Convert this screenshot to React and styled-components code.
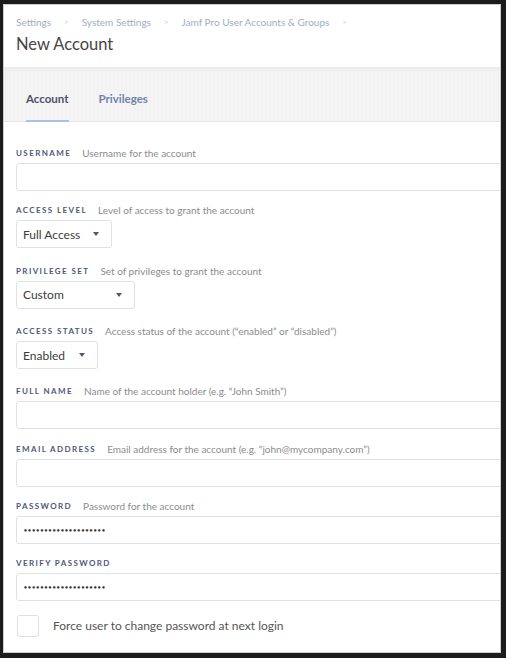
import styled, { createGlobalStyle } from "styled-components";

const GlobalStyle = createGlobalStyle`
  html, body {
    margin: 0;
    padding: 0;
    background-color: #1c1c1c;
    font-family: Lato, "Open Sans", "Liberation Sans", sans-serif;
  }
`;

const Panel = styled.div`
  display: flex;
  flex-direction: column;
  margin: 4px 5px 5px 3px;
  height: 649px;
  box-sizing: border-box;
  background-color: white;
  border: 1px solid #cdcdcd;
  overflow: hidden;
`;

const Header = styled.div`
  display: flex;
  flex-direction: column;
  padding: 10px 12px 13px 12px;
  gap: 5px;
`;

const Crumbs = styled.div`
  display: flex;
  align-items: center;
  gap: 13px;
  height: 14px;
  font-size: 10px;
  color: #9eadc8;
`;

const Sep = styled.span`
  color: #c4ccdb;
  font-size: 8px;
`;

const Title = styled.div`
  font-size: 16.5px;
  line-height: 20px;
  color: #444;
`;

const TabBar = styled.div`
  display: flex;
  align-items: flex-end;
  height: 53px;
  padding: 0 22px;
  gap: 30px;
  background-color: #f4f4f4;
  background-image: radial-gradient(#eeeeee 0.6px, transparent 0.8px);
  background-size: 4px 4px;
  border-top: 1px solid #ececec;
  border-bottom: 1px solid #e6e6e6;
  box-shadow: inset 0 2px 3px rgba(0, 0, 0, 0.03);
`;

const Tab = styled.div`
  font-size: 11.5px;
  font-weight: 700;
  padding-bottom: 15px;
  color: ${(p) => (p.active ? "#4c5366" : "#7084ab")};
  border-bottom: 2px solid ${(p) => (p.active ? "#aac2dd" : "transparent")};
  margin-bottom: -1px;
`;

const Form = styled.div`
  display: flex;
  flex-direction: column;
  padding: 25px 0 0 12px;
`;

const Field = styled.div`
  display: flex;
  flex-direction: column;
  gap: 4px;
  margin-bottom: ${(p) => (p.select ? "16.4px" : "13.3px")};
`;

const LabelRow = styled.div`
  display: flex;
  align-items: center;
  height: 12px;
  gap: 11px;
`;

const Label = styled.span`
  font-size: 8px;
  font-weight: 700;
  letter-spacing: 1.4px;
  text-transform: uppercase;
  color: #4d5877;
`;

const Hint = styled.span`
  font-size: 10px;
  color: #8c8c8c;
`;

const Input = styled.div`
  display: flex;
  align-items: center;
  height: 28px;
  width: calc(100% + 4px);
  box-sizing: border-box;
  padding-left: 7px;
  border: 1px solid #dee1e8;
  border-radius: 3px;
  background: white;
`;

const Dots = styled.span`
  font-size: 5px;
  letter-spacing: 1.1px;
  color: #333;
`;

const Select = styled.div`
  display: flex;
  align-items: center;
  justify-content: space-between;
  height: 28px;
  width: ${(p) => p.w}px;
  box-sizing: border-box;
  padding: 0 12px 0 6px;
  border: 1px solid #dee1e8;
  border-radius: 3px;
  font-size: 12px;
  color: #3c3c3c;
`;

const Caret = styled.span`
  width: 0;
  height: 0;
  border-left: 3.5px solid transparent;
  border-right: 3.5px solid transparent;
  border-top: 4px solid #4d5877;
`;

const CheckRow = styled.div`
  display: flex;
  align-items: center;
  gap: 14px;
  padding-left: 1px;
`;

const Box = styled.div`
  width: 22px;
  height: 22px;
  box-sizing: border-box;
  border: 1px solid #dcdfe6;
  border-radius: 3px;
`;

const CheckText = styled.span`
  font-size: 12px;
  color: #555;
`;

const fields = [
  { label: "Username", hint: "Username for the account" },
  { label: "Access Level", hint: "Level of access to grant the account", select: "Full Access", w: 96 },
  { label: "Privilege Set", hint: "Set of privileges to grant the account", select: "Custom", w: 119 },
  { label: "Access Status", hint: "Access status of the account (\u201cenabled\u201d or \u201cdisabled\u201d)", select: "Enabled", w: 82 },
  { label: "Full Name", hint: "Name of the account holder (e.g. \u201cJohn Smith\u201d)" },
  { label: "Email Address", hint: "Email address for the account (e.g. \u201cjohn@mycompany.com\u201d)" },
  { label: "Password", hint: "Password for the account", pw: true },
  { label: "Verify Password", pw: true },
];

export default function App() {
  return (
    <>
      <GlobalStyle />
      <Panel>
        <Header>
          <Crumbs>
            <span>Settings</span>
            <Sep>&gt;</Sep>
            <span>System Settings</span>
            <Sep>&gt;</Sep>
            <span>Jamf Pro User Accounts &amp; Groups</span>
            <Sep>&gt;</Sep>
          </Crumbs>
          <Title>New Account</Title>
        </Header>
        <TabBar>
          <Tab active>Account</Tab>
          <Tab>Privileges</Tab>
        </TabBar>
        <Form>
          {fields.map((f) => (
            <Field key={f.label} select={!!f.select}>
              <LabelRow>
                <Label>{f.label}</Label>
                {f.hint && <Hint>{f.hint}</Hint>}
              </LabelRow>
              {f.select ? (
                <Select w={f.w}>
                  {f.select}
                  <Caret />
                </Select>
              ) : (
                <Input>{f.pw && <Dots>{"\u25CF".repeat(20)}</Dots>}</Input>
              )}
            </Field>
          ))}
          <CheckRow>
            <Box />
            <CheckText>Force user to change password at next login</CheckText>
          </CheckRow>
        </Form>
      </Panel>
    </>
  );
}
